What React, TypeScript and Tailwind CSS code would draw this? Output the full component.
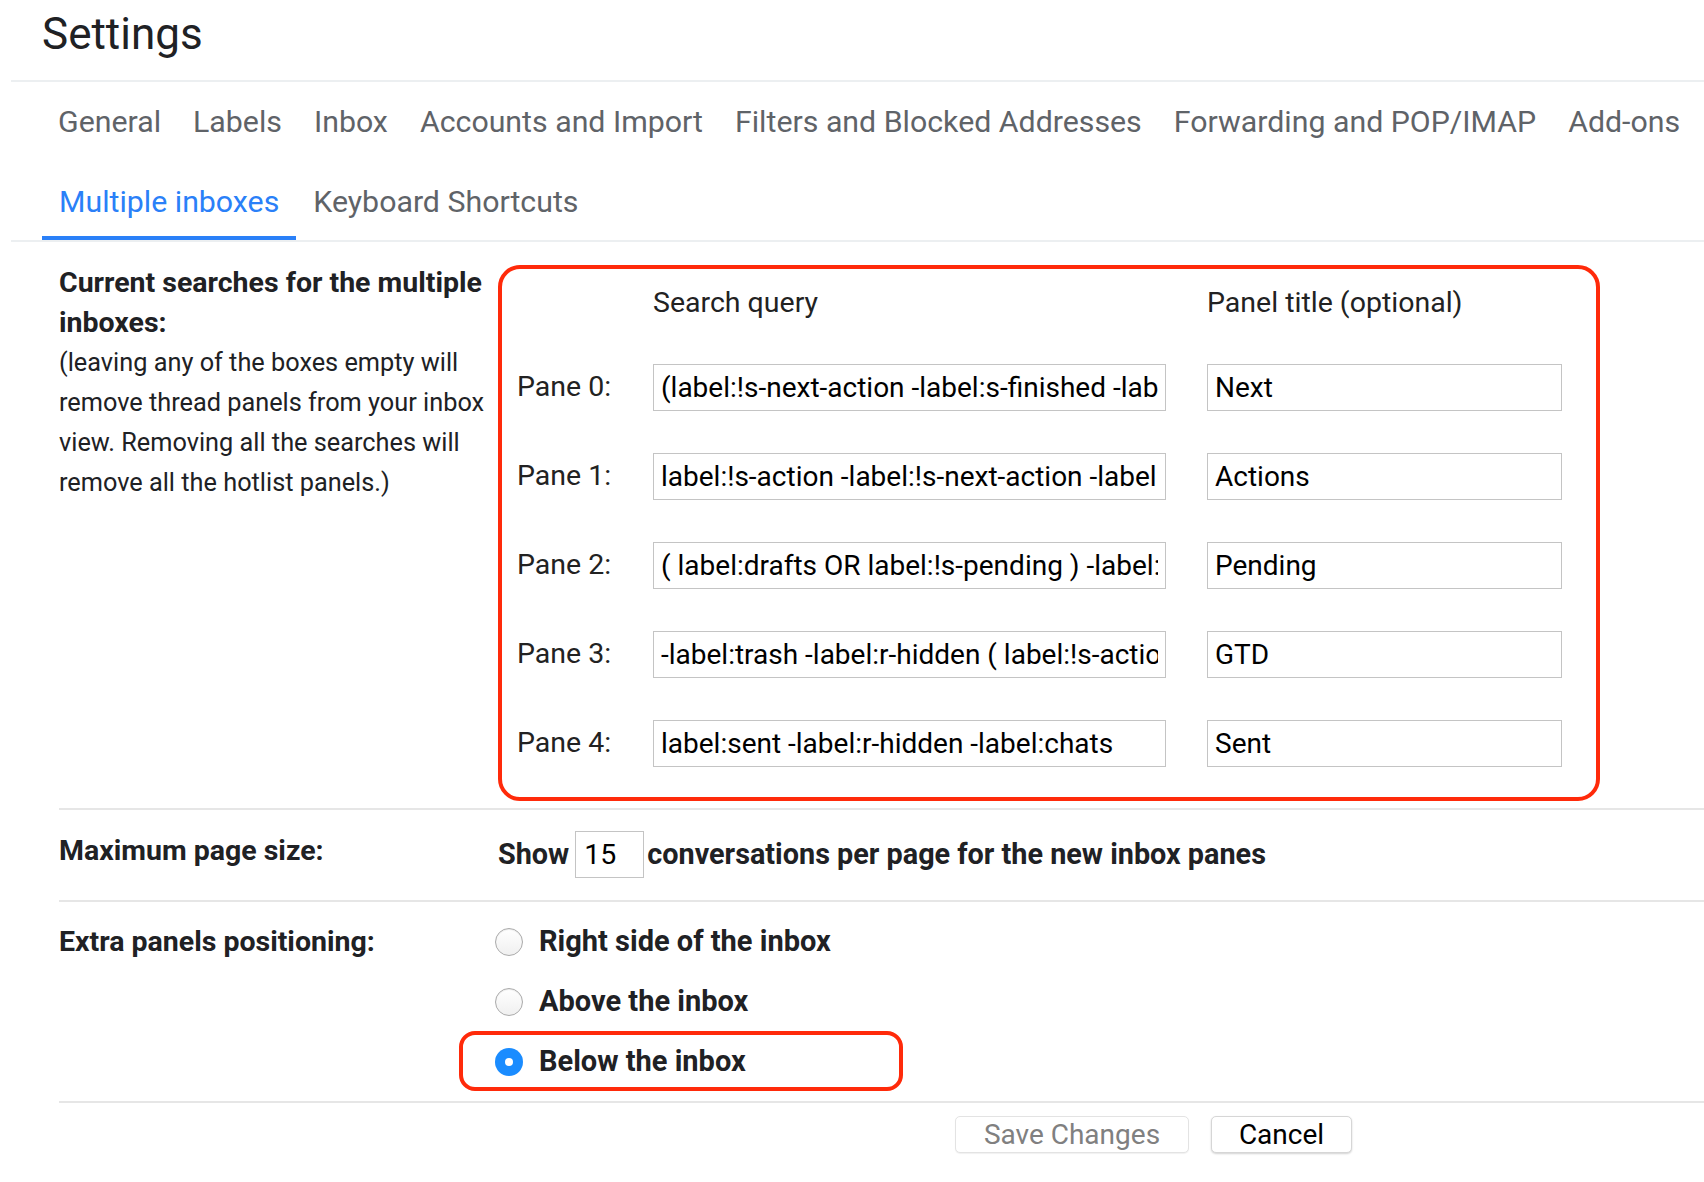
import React from 'react';

const tabsTop = ['General', 'Labels', 'Inbox', 'Accounts and Import', 'Filters and Blocked Addresses', 'Forwarding and POP/IMAP', 'Add-ons'];

const panes = [
  { query: '(label:!s-next-action -label:s-finished -label:s-someday)', title: 'Next' },
  { query: 'label:!s-action -label:!s-next-action -label:s-finished', title: 'Actions' },
  { query: '( label:drafts OR label:!s-pending ) -label:trash', title: 'Pending' },
  { query: '-label:trash -label:r-hidden ( label:!s-action OR label:!s-next-action )', title: 'GTD' },
  { query: 'label:sent -label:r-hidden -label:chats', title: 'Sent' },
];

const positions = ['Right side of the inbox', 'Above the inbox', 'Below the inbox'];

function Radio({ checked }: { checked: boolean }) {
  if (checked) {
    return (
      <span className="w-[28px] h-[28px] rounded-full bg-[#1a8cff] flex items-center justify-center shrink-0">
        <span className="w-[8px] h-[8px] rounded-full bg-white" />
      </span>
    );
  }
  return (
    <span className="w-[28px] h-[28px] rounded-full border border-[#ababab] bg-gradient-to-b from-white to-[#f0f0f0] shadow-[inset_0_1px_1px_rgba(0,0,0,0.08)] shrink-0" />
  );
}

export default function App() {
  return (
    <div className="w-[1704px] h-[1182px] bg-white overflow-hidden text-[#202124] font-['Roboto','Liberation_Sans',sans-serif]">
      {/* header */}
      <div className="h-[80px] pl-[42px] pb-[12px] flex items-center">
        <h1 className="text-[44px] leading-none text-[#202124]">Settings</h1>
      </div>
      <div className="ml-[11px] border-t-2 border-[#eceff1]" />

      {/* tabs */}
      <div className="ml-[42px]">
        <div className="h-[78px] pt-[2px] flex items-center">
          {tabsTop.map(t => (
            <span key={t} className="px-[16px] text-[30.3px] leading-none text-[#5f6368] whitespace-nowrap">{t}</span>
          ))}
        </div>
        <div className="h-[80px] flex items-stretch">
          <div className="relative flex items-center pt-[4px] px-[17px] text-[30.3px] leading-none text-[#2a80f8]">
            Multiple inboxes
            <span className="absolute left-0 right-0 bottom-0 h-[4px] bg-[#2a80f8]" />
          </div>
          <div className="flex items-center pt-[4px] px-[17px] text-[30.3px] leading-none text-[#5f6368]">Keyboard Shortcuts</div>
        </div>
      </div>
      <div className="ml-[11px] border-t-2 border-[#eceff1]" />

      <div className="ml-[59px]">
        {/* multiple inbox searches */}
        <div className="flex pt-[21px] pb-[7px] border-b-2 border-[#e6e6e6]">
          <div className="w-[439px] shrink-0">
            <div className="text-[28.5px] leading-[40px] font-bold">Current searches for the multiple inboxes:</div>
            <div className="text-[25.3px] leading-[40px]">
              (leaving any of the boxes empty will remove thread panels from your inbox view. Removing all the searches will remove all the hotlist panels.)
            </div>
          </div>
          <div className="mt-[2px] w-[1102px] border-4 border-[#ff2a0a] rounded-[22px] pl-[15px] pr-[30px] pt-[14px] pb-[30px]">
            <div className="flex h-[40px] items-center text-[28.5px] text-[#222]">
              <div className="w-[136px]" />
              <div className="w-[554px]">Search query</div>
              <div>Panel title (optional)</div>
            </div>
            <div className="mt-[41px] flex flex-col gap-[42px]">
              {panes.map((p, i) => (
                <div key={i} className="flex items-center h-[47px]">
                  <div className="w-[136px] text-[28.5px] text-[#222]">Pane {i}:</div>
                  <input
                    readOnly
                    value={p.query}
                    className="w-[513px] h-[47px] border border-[#c4c4c4] px-[7px] text-[28px] text-black outline-none bg-white"
                  />
                  <input
                    readOnly
                    value={p.title}
                    className="ml-[41px] w-[355px] h-[47px] border border-[#c4c4c4] px-[7px] text-[28px] text-black outline-none bg-white"
                  />
                </div>
              ))}
            </div>
          </div>
        </div>

        {/* page size */}
        <div className="flex pt-[21px] pb-[22px] border-b-2 border-[#e6e6e6]">
          <div className="w-[439px] shrink-0 text-[28.5px] leading-[40px] font-bold">Maximum page size:</div>
          <div className="flex items-center text-[28.8px] font-bold">
            <span>Show</span>
            <input
              readOnly
              value="15"
              className="ml-[6px] w-[69px] h-[47px] border border-[#c4c4c4] px-[8px] font-normal text-[28.5px] text-black outline-none bg-white"
            />
            <span className="ml-[3px]">conversations per page for the new inbox panes</span>
          </div>
        </div>

        {/* positioning */}
        <div className="flex pt-[10px] pb-[9px] border-b-2 border-[#e6e6e6]">
          <div className="w-[439px] shrink-0 h-[60px] flex items-center text-[28.5px] font-bold">Extra panels positioning:</div>
          <div className="flex flex-col -ml-[3px]">
            {positions.map((label, i) => (
              <div key={label} className="relative h-[60px] flex items-center">
                <Radio checked={i === 2} />
                <span className="ml-[16px] text-[29px] font-bold">{label}</span>
                {i === 2 && (
                  <span className="absolute -left-[36px] -top-[1px] w-[444px] h-[60px] border-4 border-[#ff2a0a] rounded-[16px]" />
                )}
              </div>
            ))}
          </div>
        </div>

        {/* buttons */}
        <div className="pt-[13px] pl-[896px] flex gap-[22px]">
          <button className="w-[234px] h-[37px] rounded-[5px] border border-[#e3e3e3] bg-white shadow-[0_1px_1px_rgba(0,0,0,0.06)] text-[28px] leading-none text-[#808080]">
            Save Changes
          </button>
          <button className="w-[141px] h-[37px] rounded-[5px] border border-[#d6d6d6] bg-white shadow-[0_1px_2px_rgba(0,0,0,0.18)] text-[28px] leading-none text-black">
            Cancel
          </button>
        </div>
      </div>
    </div>
  );
}
